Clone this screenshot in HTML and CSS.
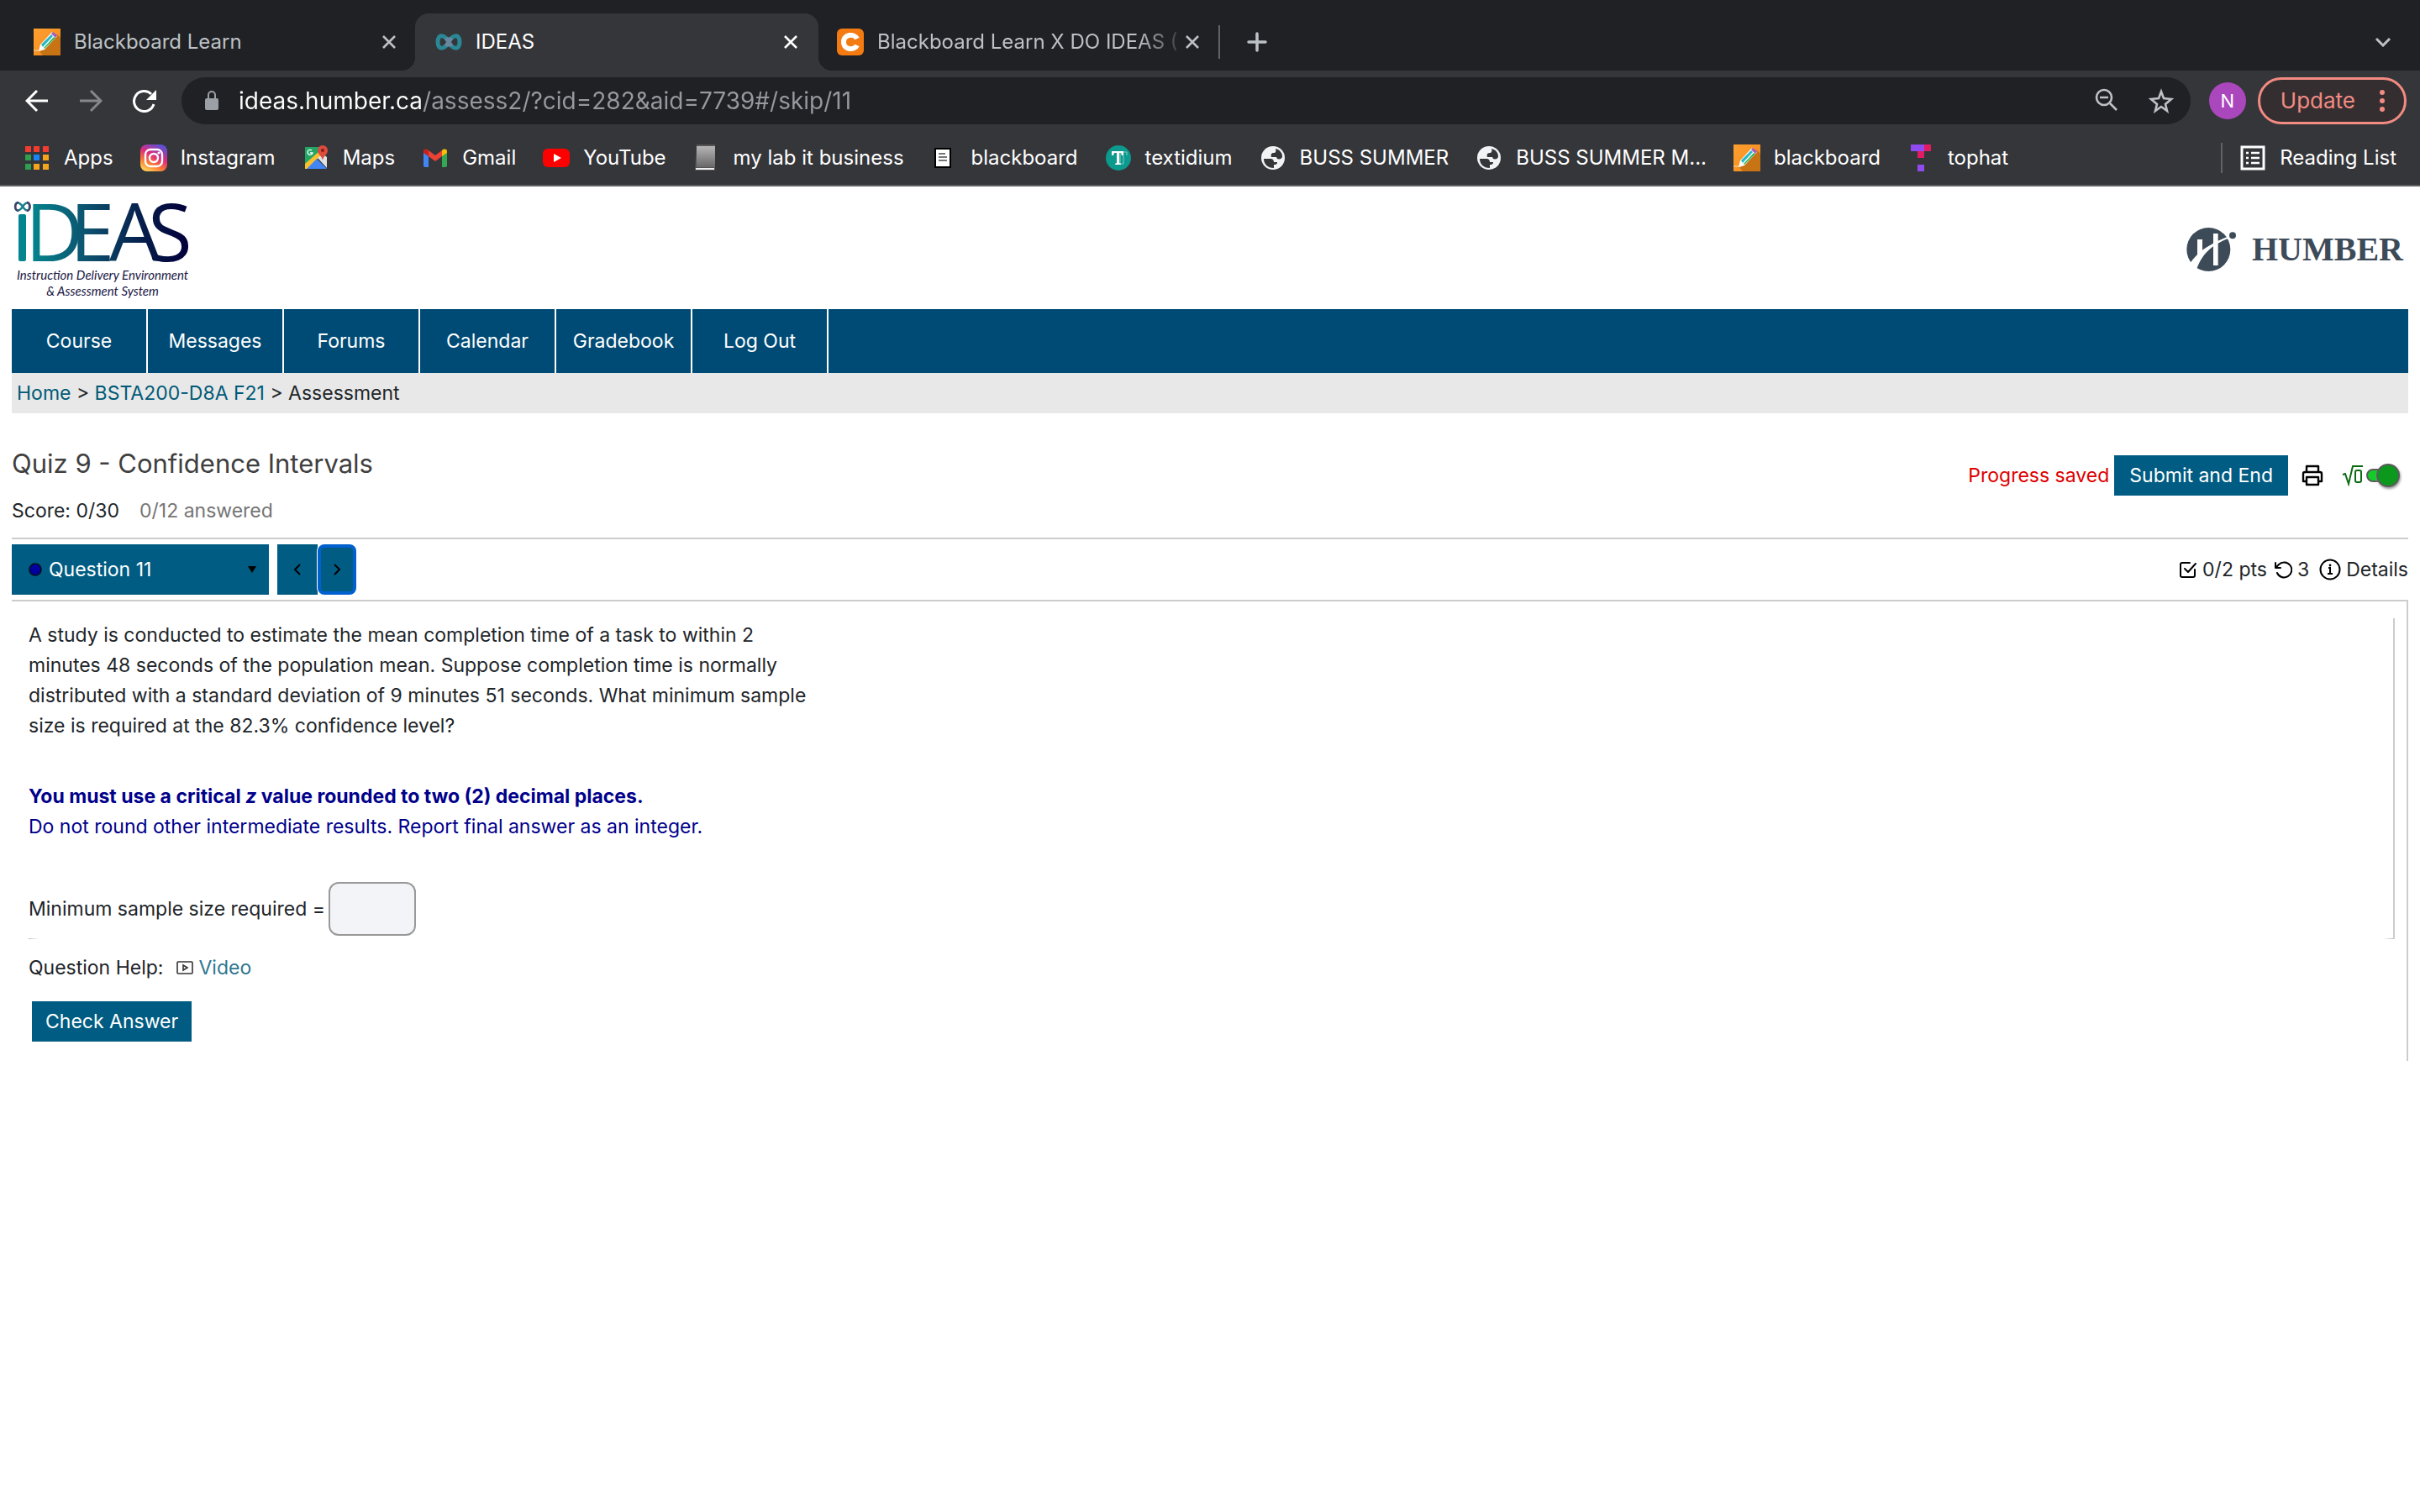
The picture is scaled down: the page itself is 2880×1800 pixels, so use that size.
FILE: index.html
```html
<!DOCTYPE html>
<html lang="en">
<head>
<meta charset="UTF-8">
<title>IDEAS</title>
<link rel="stylesheet" href="styles.css">
</head>
<body>
  <!-- shared icons -->
  <svg class="defs" width="0" height="0" aria-hidden="true">
    <defs>
      <linearGradient id="orange" x1="0" y1="0" x2="1" y2="1">
        <stop offset="0" stop-color="#ffa030"/><stop offset="1" stop-color="#f0881a"/>
      </linearGradient>
      <linearGradient id="insta" x1="0.2" y1="1" x2="0.7" y2="0">
        <stop offset="0" stop-color="#ffd95a"/><stop offset="0.3" stop-color="#fb7a35"/><stop offset="0.6" stop-color="#dc2c7c"/><stop offset="1" stop-color="#5b51d8"/>
      </linearGradient>
      <linearGradient id="metal" x1="0" y1="0" x2="0" y2="1">
        <stop offset="0" stop-color="#b5b5b5"/><stop offset="1" stop-color="#686868"/>
      </linearGradient>
      <linearGradient id="ideas" gradientUnits="userSpaceOnUse" x1="0" y1="0" x2="208" y2="0">
        <stop offset="0.1" stop-color="#04858d"/><stop offset="0.45" stop-color="#0d4d6b"/><stop offset="0.75" stop-color="#061c4a"/><stop offset="1" stop-color="#02003a"/>
      </linearGradient>
      <symbol id="pencil" viewBox="0 0 32 32">
        <path fill="url(#orange)" d="M0 0h32v32H0z"/>
        <path fill="#c87314" d="M28 7l4 4v21H11l-5-6z"/>
        <path fill="none" stroke="#ffd9a8" stroke-width="1" d="M0 26h9"/>
        <path fill="#fff" d="M6 27l2-8L22 4l6 5-15 16z"/>
        <path fill="#28b8c8" d="M9 19L21 7l2 2-12 13z"/>
        <path fill="#35b558" d="M12 23L24 10l2 1-13 13z"/>
        <path fill="#a55ac0" d="M21 6l2-2 5 4-2 3z"/>
      </symbol>
      <symbol id="close" viewBox="0 0 18 18">
        <path fill="none" stroke="currentColor" stroke-width="2.6" d="M2 2l14 14M16 2L2 16"/>
      </symbol>
      <symbol id="globe" viewBox="0 0 32 32">
        <circle cx="16" cy="16" r="14" fill="#f1f3f4"/>
        <path fill="#35363a" d="M19 5c5 1 8 5 8 9 0 3-3 4-6 3l-1-2h-6c-1-3 0-5 3-5 2 0 3-2 2-5zM5 17h8c3 0 4 2 4 4h4c0 3-2 3-4 3v4C9 28 5 23 5 17z"/>
      </symbol>
    </defs>
  </svg>

  <header class="browser">
    <div class="tabs">
      <div class="tab">
        <svg class="favicon"><use href="#pencil"/></svg>
        <span class="tab-title">Blackboard Learn</span>
        <button class="tab-close" aria-label="Close tab"><svg width="18" height="18"><use href="#close"/></svg></button>
      </div>
      <div class="tab active">
        <svg class="favicon" viewBox="0 0 32 32"><path fill="none" stroke="#2a8795" stroke-width="5" d="M16 16C12 8 3 5 3 16s9 8 13 0 13-11 13 0-9 8-13 0z"/><path fill="none" stroke="#6787a0" stroke-width="5" d="M13 11l6 10M13 21l6-10"/></svg>
        <span class="tab-title">IDEAS</span>
        <button class="tab-close" aria-label="Close tab"><svg width="18" height="18"><use href="#close"/></svg></button>
      </div>
      <div class="tab last">
        <svg class="favicon" viewBox="0 0 32 32"><rect width="32" height="32" rx="6" fill="#f47a12"/><path fill="none" stroke="#fff" stroke-width="6" d="M24 12c-3-6-16-6-16 4s13 10 16 4"/></svg>
        <span class="tab-title fade">Blackboard Learn X DO IDEAS (</span>
        <button class="tab-close" aria-label="Close tab"><svg width="18" height="18"><use href="#close"/></svg></button>
      </div>
      <span class="tab-divider"></span>
      <button class="new-tab" aria-label="New tab"><svg width="24" height="24" viewBox="0 0 24 24"><path stroke="currentColor" stroke-width="3.5" stroke-linecap="round" d="M12 2v20M2 12h20"/></svg></button>
      <button class="tab-search" aria-label="Search tabs"><svg width="20" height="12" viewBox="0 0 20 12"><path fill="none" stroke="currentColor" stroke-width="3" d="M2 2l8 8 8-8"/></svg></button>
    </div>

    <div class="toolbar">
      <div class="tools">
        <button class="tool" aria-label="Back"><svg width="28" height="28" viewBox="0 0 28 28"><path fill="none" stroke="#fff" stroke-width="3" d="M27 14H3M14 2L2 14l12 12"/></svg></button>
        <button class="tool" aria-label="Forward"><svg width="28" height="28" viewBox="0 0 28 28"><path fill="none" stroke="#85878b" stroke-width="3" d="M1 14h24M14 2l12 12-12 12"/></svg></button>
        <button class="tool" aria-label="Reload"><svg width="28" height="28" viewBox="0 0 28 28"><path fill="none" stroke="#fff" stroke-width="3" d="M25 18A12 12 0 1 1 22 6"/><path fill="#fff" d="M28 1v12H16z"/></svg></button>
      </div>
      <div class="omnibox">
        <svg width="18" height="24" viewBox="0 0 18 24"><rect y="9" x="1" width="16" height="14" rx="2" fill="#9aa0a6"/><path fill="none" stroke="#9aa0a6" stroke-width="2" d="M5 10V5a4 4 0 0 1 8 0v5"/></svg>
        <input class="url" type="text" aria-label="Address" value="ideas.humber.ca/assess2/?cid=282&amp;aid=7739#/skip/11">
        <div class="tools">
          <button class="tool" aria-label="Zoom"><svg width="28" height="28" viewBox="0 0 28 28"><g fill="none" stroke="#bdc1c6" stroke-width="2.6"><circle cx="11" cy="11" r="9"/><path d="M6 11h10M18 18l8 8"/></g></svg></button>
          <button class="tool" aria-label="Bookmark"><svg width="30" height="30" viewBox="0 0 30 30"><path fill="none" stroke="#bdc1c6" stroke-width="2.6" d="M15 4l3 8 9 1-7 6 2 8-7-5-7 5 2-8-7-6 9-1z"/></svg></button>
        </div>
      </div>
      <button class="avatar">N</button>
      <button class="update">Update <svg width="8" height="28" viewBox="0 0 8 28" fill="currentColor"><circle cx="4" cy="4" r="3"/><circle cx="4" cy="14" r="3"/><circle cx="4" cy="24" r="3"/></svg></button>
    </div>

    <nav class="bookmarks">
      <a href="#"><svg viewBox="0 0 32 32"><path fill="#f33b2f" d="M2 2h7v7H2zM12 2h7v7h-7zM23 2h7v7h-7z"/><path fill="#2e9e4f" d="M2 12h7v7H2zM2 23h7v7H2z"/><path fill="#1a86f5" d="M12 12h7v7h-7z"/><path fill="#f5a51c" d="M23 12h7v7h-7zM12 23h7v7h-7zM23 23h7v7h-7z"/></svg>Apps</a>
      <a href="#"><svg viewBox="0 0 32 32"><rect width="32" height="32" rx="8" fill="url(#insta)"/><g fill="none" stroke="#fff" stroke-width="2.4"><rect x="6" y="6" width="20" height="20" rx="6"/><circle cx="16" cy="16" r="5"/></g><circle cx="22" cy="10" r="1.6" fill="#fff"/></svg>Instagram</a>
      <a href="#"><svg viewBox="0 0 32 32"><path fill="#22a565" d="M3 3h22L3 27z"/><path fill="#fbc02d" d="M3 23L20 8l3 4L6 29H3z"/><path fill="#4285f4" d="M5 29l12-12 12 12z"/><path fill="#dfe3e6" d="M18 16l6-5 5 4v13z"/><path fill="#dd4b3e" d="M24 1a6 6 0 0 1 6 6c0 5-5 6-6 12-1-6-6-7-6-12a6 6 0 0 1 6-6z"/><circle cx="24" cy="7" r="2" fill="#7b1f17"/><path fill="none" stroke="#fff" stroke-width="1.3" d="M11 7a3 3 0 1 0 1 3h-3"/></svg>Maps</a>
      <a href="#"><svg viewBox="0 0 32 32"><path fill="#4285f4" d="M2 9l6 5v13H4a2 2 0 0 1-2-2z"/><path fill="#34a853" d="M24 14l6-5v16a2 2 0 0 1-2 2h-4z"/><path fill="#ea4335" d="M8 14V7l8 6 8-6v7l-8 6z"/><path fill="#c5221f" d="M2 10V8c0-3 4-3 6-1v7z"/><path fill="#fbbc04" d="M30 10V8c0-3-4-3-6-1v7z"/></svg>Gmail</a>
      <a href="#"><svg viewBox="0 0 32 32"><rect y="5" width="32" height="22" rx="6" fill="#f00"/><path fill="#fff" d="M13 11l9 5-9 5z"/></svg>YouTube</a>
      <a href="#"><svg viewBox="0 0 32 32"><path fill="#555" d="M4 0h22v31H2z"/><path fill="url(#metal)" d="M4 2h22v25H4z"/><path fill="#eee" d="M3 28h22v2H3z"/></svg>my lab it business</a>
      <a href="#"><svg viewBox="0 0 32 32"><path fill="#000" d="M4 4h20v24H4z"/><path fill="#fff" d="M6 6h16v20H6z"/><path stroke="#777" stroke-width="2" d="M9 11h8M9 15h10M9 19h10"/></svg>blackboard</a>
      <a href="#"><svg viewBox="0 0 32 32"><circle cx="16" cy="16" r="15" fill="#0d9a8e"/><path fill="none" stroke="#7fd0c8" d="M14 9h12v4M18 9v14h4V13"/><path fill="#fff" d="M8 8h14v5h-2l-1-3h-2v12l2 1v1h-7v-1l2-1V10h-3l-1 3H8z"/></svg>textidium</a>
      <a href="#"><svg><use href="#globe"/></svg>BUSS SUMMER</a>
      <a href="#"><svg><use href="#globe"/></svg>BUSS SUMMER M...</a>
      <a href="#"><svg><use href="#pencil"/></svg>blackboard</a>
      <a href="#"><svg viewBox="0 0 32 32"><path fill="#8f4bf0" d="M4 0h16v8H4zM12 24h8v8h-8z"/><path fill="#e31b63" d="M20 0h8v8h-8zM12 8h8v8h-8z"/></svg>tophat</a>
      <a href="#" class="reading"><svg viewBox="0 0 32 32"><rect x="3" y="3" width="26" height="26" fill="none" stroke="#fff" stroke-width="3"/><path stroke="#fff" stroke-width="2.6" d="M8 10h3M8 16h3M8 22h3M14 10h10M14 16h10M14 22h10"/></svg>Reading List</a>
    </nav>
  </header>

  <div class="page">
    <div class="banner">
      <svg class="ideas-logo" width="220" height="124" viewBox="0 0 220 124" role="img" aria-label="IDEAS">
        <path fill="none" stroke="#1d7f8d" stroke-width="2.4" d="M11 10C7 4 2 4 2 10s5 6 9 0 8-6 8 0-4 6-8 0z"/>
        <path fill="none" stroke="#46406a" stroke-width="2.4" d="M6 5C1 5 1 15 6 15M16 5c5 0 5 10 0 10"/>
        <rect x="6" y="19" width="9" height="56" rx="2" fill="url(#ideas)"/>
        <text class="logo-letters" x="14 67 114 160" y="75">DEAS</text>
        <text class="logo-tag" x="106" y="97">Instruction Delivery Environment</text>
        <text class="logo-tag" x="106" y="116">&amp; Assessment System</text>
      </svg>
      <div class="humber">
        <svg width="60" height="54" viewBox="124 90 180 162"><circle cx="203" cy="171" r="78" fill="#3d4b59"/><circle cx="289" cy="121" r="12" fill="#3d4b59"/><path fill="#fff" d="M163 135h18v62h-18zM220 114h17v114h-17zM136 222C165 180 200 155 270 126l2 6C225 152 185 175 160 242z"/></svg>
        <span>HUMBER</span>
      </div>
    </div>

    <nav class="menu">
      <a href="#">Course</a>
      <a href="#">Messages</a>
      <a href="#">Forums</a>
      <a href="#">Calendar</a>
      <a href="#">Gradebook</a>
      <a href="#">Log Out</a>
    </nav>
    <div class="breadcrumb"><a href="#">Home</a> &gt; <a href="#">BSTA200-D8A F21</a> &gt; Assessment</div>

    <div class="quiz-header">
      <div>
        <h1>Quiz 9 - Confidence Intervals</h1>
        <div class="score"><span>Score: 0/30</span><span class="answered">0/12 answered</span></div>
      </div>
      <div class="quiz-actions">
        <span class="saved">Progress saved</span>
        <button class="primary">Submit and End</button>
        <button class="print" aria-label="Print"><svg width="26" height="26" viewBox="0 0 26 26"><g fill="none" stroke="#000" stroke-width="2.4" stroke-linejoin="round"><path d="M6 9V2h14v7M6 20H2v-9a2 2 0 0 1 2-2h18a2 2 0 0 1 2 2v9h-4"/><path d="M6 15h14v9H6z"/></g></svg></button>
        <label class="math">
          <svg width="26" height="26" viewBox="0 0 26 26"><path fill="none" stroke="#0b6b12" stroke-width="2" d="M1 12l3-1 4 12 5-21h12"/><rect x="16" y="7" width="7" height="14" rx="2" fill="none" stroke="#0b6b12" stroke-width="2"/></svg>
          <input type="checkbox" role="switch" aria-label="Equation editor" checked>
        </label>
      </div>
    </div>

    <div class="question-bar">
      <div class="picker">
        <svg width="16" height="18" viewBox="0 0 16 18"><circle cx="8" cy="9" r="7" fill="#00009f" stroke="#03101c" stroke-width="1.6"/></svg>
        <select aria-label="Question"><option>Question 11</option></select>
        <svg width="10" height="8" viewBox="0 0 10 8"><path d="M0 0h10L5 8z"/></svg>
      </div>
      <button class="step" aria-label="Previous question"><svg width="8" height="14" viewBox="0 0 8 14"><path fill="none" stroke="#000" stroke-width="2" d="M7 1L1 7l6 6"/></svg></button>
      <button class="step focused" aria-label="Next question"><svg width="8" height="14" viewBox="0 0 8 14"><path fill="none" stroke="#000" stroke-width="2" d="M1 1l6 6-6 6"/></svg></button>
      <div class="points">
        <svg width="22" height="22" viewBox="0 0 22 22"><path fill="none" stroke="#000" stroke-width="2" stroke-linecap="round" stroke-linejoin="round" d="M13 3H4a2 2 0 0 0-2 2v13a2 2 0 0 0 2 2h13a2 2 0 0 0 2-2v-7M7 10l4 4L20 4"/></svg>
        <span>0/2 pts</span>
        <svg class="retry" width="22" height="22" viewBox="0 0 22 22"><path fill="none" stroke="#000" stroke-width="2" stroke-linecap="round" stroke-linejoin="round" d="M2 3v6h6M2 9l4-4a9 9 0 1 1-2 10"/></svg>
        <span>3</span>
        <button class="details"><svg width="26" height="26" viewBox="0 0 26 26"><circle cx="13" cy="13" r="11.5" fill="none" stroke="#000" stroke-width="2"/><path fill="none" stroke="#000" stroke-width="2" d="M11 11h2v7M10 18h6"/><circle cx="13" cy="8" r="1.4"/></svg>Details</button>
      </div>
    </div>

    <main class="question">
      <div class="question-body">
        <p class="prompt">A study is conducted to estimate the mean completion time of a task to within 2<br>minutes 48 seconds of the population mean. Suppose completion time is normally<br>distributed with a standard deviation of 9 minutes 51 seconds. What minimum sample<br>size is required at the 82.3% confidence level?</p>
        <p class="note"><strong>You must use a critical <em>z</em> value rounded to two (2) decimal places.</strong><br>Do not round other intermediate results. Report final answer as an integer.</p>
        <div class="answer">
          <label for="sample-size">Minimum sample size required =</label>
          <input id="sample-size" type="text">
        </div>
      </div>
      <div class="help">
        <span>Question Help:</span>
        <a href="#"><svg width="20" height="16" viewBox="0 0 20 16"><rect x="1" y="1" width="18" height="14" rx="1" fill="none" stroke="#333" stroke-width="1.6"/><path fill="none" stroke="#333" stroke-width="1.6" d="M8 5l5 3-5 3z"/></svg>Video</a>
      </div>
      <button class="primary check">Check Answer</button>
    </main>
  </div>
</body>
</html>
```
FILE: styles.css
```css
* {
  box-sizing: border-box;
}

body {
  margin: 0;
  background: #fff;
  color: #212529;
  font-family: Inter, "Liberation Sans", sans-serif;
  font-size: 23px;
  line-height: 36px;
}

button, input, select {
  font: inherit;
  color: inherit;
  margin: 0;
}

button {
  border: 0;
  padding: 0;
  background: none;
  cursor: pointer;
}

a {
  text-decoration: none;
}

svg {
  flex: none;
}

.defs {
  display: block;
  height: 0;
}

/* browser chrome */
.browser {
  background: #35363a;
  border-bottom: 2px solid #5f6064;
  color: #fff;
  font-size: 24px;
}

.tabs {
  display: flex;
  height: 84px;
  padding: 16px 34px 0 0;
  background: #202124;
}

.tab {
  display: flex;
  align-items: center;
  width: 494px;
  padding: 0 22px 0 40px;
  color: #bdc1c6;
}

.tab.active {
  width: 480px;
  padding: 0 24px;
  border-radius: 16px 16px 0 0;
  background: #35363a;
  color: #fff;
  position: relative;
}

/* curved feet of the selected tab */
.tab.active::before,
.tab.active::after {
  content: '';
  position: absolute;
  bottom: 0;
  width: 16px;
  height: 16px;
}

.tab.active::before {
  left: -16px;
  background: radial-gradient(circle at 0 0, #202124 16px, #35363a 16px);
}

.tab.active::after {
  right: -16px;
  background: radial-gradient(circle at 100% 0, #202124 16px, #35363a 16px);
}

.tab.last {
  width: 476px;
  padding: 0 22px;
}

.favicon {
  width: 32px;
  height: 32px;
  margin-right: 16px;
}

.tab-title {
  flex: 1;
  white-space: nowrap;
}

.fade {
  -webkit-mask-image: linear-gradient(90deg, #000 310px, transparent 370px);
  mask-image: linear-gradient(90deg, #000 310px, transparent 370px);
}

.tab-close,
.new-tab,
.tab-search {
  display: flex;
  align-items: center;
}

.tab-divider {
  align-self: center;
  width: 2px;
  height: 40px;
  background: #5f6368;
}

.new-tab {
  margin-left: 32px;
  color: #bdc1c6;
}

.tab-search {
  margin-left: auto;
  color: #bdc1c6;
}

.toolbar {
  display: flex;
  align-items: center;
  padding: 8px 16px 0 30px;
}

.tools {
  display: flex;
  gap: 36px;
}

.tool {
  display: flex;
}

.omnibox {
  display: flex;
  flex: 1;
  align-items: center;
  height: 56px;
  margin-left: 30px;
  padding: 0 20px 0 27px;
  border-radius: 28px;
  background: #202124;
}

/* host in white, path in grey */
.url {
  flex: 1;
  min-width: 0;
  margin-left: 23px;
  padding: 0;
  border: 0;
  background: linear-gradient(90deg, #fff 218px, #96999d 218px);
  -webkit-background-clip: text;
  background-clip: text;
  color: transparent;
  font-size: 28px;
}

.avatar {
  width: 44px;
  height: 44px;
  margin: 0 14px 0 22px;
  border-radius: 50%;
  background: #ab47bc;
  font-size: 22px;
}

.update {
  display: flex;
  align-items: center;
  gap: 28px;
  height: 56px;
  padding: 0 22px 0 24px;
  border: 3px solid #f28b82;
  border-radius: 28px;
  background: #352e31;
  color: #f28b82;
  font-size: 26px;
}

.bookmarks {
  display: flex;
  align-items: center;
  gap: 32px;
  height: 72px;
  padding: 8px 28px 0;
}

.bookmarks a {
  display: flex;
  align-items: center;
  gap: 16px;
  color: #fff;
  white-space: nowrap;
}

.bookmarks svg {
  width: 32px;
  height: 32px;
}

.bookmarks .reading {
  margin-left: auto;
  padding-left: 20px;
  border-left: 2px solid #5f6368;
}

/* page */
.page {
  padding: 0 14px;
}

.banner {
  display: flex;
  align-items: flex-start;
  justify-content: space-between;
  height: 146px;
  padding: 14px 6px 0 2px;
}

.ideas-logo {
  overflow: visible;
}

.logo-letters {
  fill: url(#ideas);
  font-family: "Open Sans", sans-serif;
  font-size: 96px;
}

.logo-tag {
  fill: #1b1745;
  font-family: Lato, sans-serif;
  font-size: 15px;
  font-style: italic;
  text-anchor: middle;
}

.humber {
  display: flex;
  align-items: center;
  gap: 18px;
  padding-top: 34px;
  color: #3d4b59;
  font-family: "Liberation Serif", serif;
  font-size: 40px;
  font-weight: bold;
}

.menu {
  display: flex;
  background: #004b75;
}

.menu a {
  width: 162px;
  border-right: 2px solid #fff;
  color: #fff;
  line-height: 76px;
  text-align: center;
}

.breadcrumb {
  padding: 6px;
  background: #e8e8e8;
}

.breadcrumb a {
  color: #005a77;
}

.quiz-header {
  display: flex;
  justify-content: space-between;
  padding: 40px 0 14px;
  border-bottom: 2px solid #ccc;
}

h1 {
  margin: 0 0 18px;
  color: #404040;
  font-size: 31px;
  font-weight: normal;
  line-height: 40px;
}

.score {
  display: flex;
  gap: 24px;
}

.answered {
  color: #757575;
}

.quiz-actions {
  display: flex;
  align-items: center;
  align-self: flex-start;
  margin-top: 10px;
}

.saved {
  margin-right: 6px;
  color: #d00;
}

.primary {
  height: 48px;
  padding: 0 18px;
  background: #005c82;
  color: #fff;
}

.print {
  display: flex;
  margin: 0 22px 0 16px;
}

.math {
  display: flex;
  align-items: center;
  gap: 3px;
  padding-right: 4px;
}

.math input {
  display: flex;
  align-items: center;
  width: 46px;
  height: 28px;
  appearance: none;
}

/* track, with the knob over its right end */
.math input::before {
  content: '';
  flex: none;
  width: 34px;
  height: 16px;
  border: 2px solid #5c5c5c;
  border-radius: 8px;
  background: #12cc28;
}

.math input::after {
  content: '';
  flex: none;
  width: 28px;
  height: 28px;
  margin-left: -22px;
  border: 2px solid #5c5c5c;
  border-radius: 50%;
  background: #0b981d;
  box-shadow: 1px 2px 3px #999;
}

/* generated boxes do not inherit the page's box model */
.math input::before,
.math input::after {
  box-sizing: border-box;
}

.question-bar {
  display: flex;
  align-items: center;
  padding: 6px 0;
  border-bottom: 2px solid #ccc;
}

.picker {
  display: flex;
  align-items: center;
  width: 306px;
  height: 60px;
  margin-right: 10px;
  padding: 0 15px 0 20px;
  background: #005c82;
}

.picker select {
  flex: 1;
  margin-left: 8px;
  border: 0;
  padding: 0;
  appearance: none;
  background: none;
  color: #fff;
}

.step {
  display: flex;
  align-items: center;
  justify-content: center;
  width: 48px;
  height: 60px;
  background: #005c82;
}

.step.focused {
  width: 46px;
  border: 4px solid #0060d0;
  border-radius: 8px;
  box-shadow: 0 0 0 1px #fff;
}

.points {
  display: flex;
  align-items: center;
  gap: 6px;
  margin-left: auto;
}

.retry {
  margin-left: 2px;
}

.details {
  display: flex;
  align-items: center;
  gap: 6px;
  margin-left: 6px;
}

.question {
  padding: 20px 14px 23px 20px;
  border-right: 2px solid #ccc;
}

.question-body {
  padding: 2px 0 4px;
  border-right: 2px solid #ccc;
  /* faint corners at both ends of the lower edge */
  background:
    linear-gradient(90deg, #bbb, #fff) left bottom / 12px 1px no-repeat,
    linear-gradient(270deg, #bbb, #fff) right bottom / 12px 1px no-repeat;
}

.prompt {
  margin: 0 0 48px;
}

.note {
  margin: 0 0 48px;
  color: #00008b;
}

.answer {
  display: flex;
  align-items: center;
  gap: 4px;
}

.answer input {
  width: 104px;
  height: 64px;
  padding: 0 12px;
  border: 2px solid #999;
  border-radius: 12px;
  background: #f3f4f7;
}

.help {
  display: flex;
  gap: 16px;
  margin-top: 16px;
}

.help a {
  display: flex;
  align-items: center;
  gap: 6px;
  color: #2f7790;
}

.check {
  margin: 22px 0 0 4px;
  padding: 0 16px;
}
```
